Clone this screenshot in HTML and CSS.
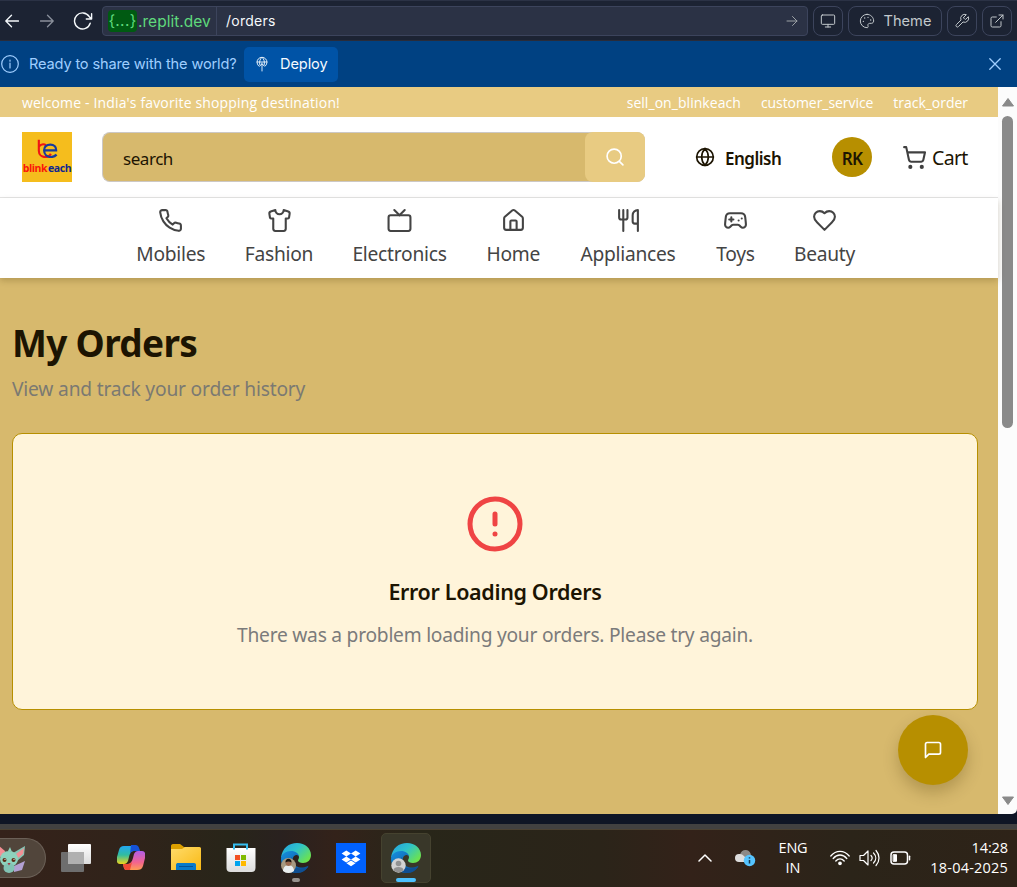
FILE: index.html
```html
<!DOCTYPE html>
<html lang="en">
<head>
<meta charset="utf-8">
<title>My Orders</title>
<link rel="stylesheet" href="styles.css">
</head>
<body>
<div class="toolbar">
  <div class="nav-buttons">
    <svg class="ico nb-back" viewBox="0 0 14 14"><path d="M13.5 7H1M6.500 1.200L.8 7l5.700 5.800"/></svg>
    <svg class="ico nb-fwd" viewBox="0 0 14 14"><path d="M.5 7H13M7.500 1.200L13.200 7l-5.700 5.800"/></svg>
    <svg class="ico nb-reload" viewBox="0 0 20 18"><path d="M17.200 11.200A8 8 0 1 1 16.200 4.500L18 6.800M18.600 1.800V7H13.300"/></svg>
  </div>
  <div class="address">
    <div class="host"><span class="braces">{...}</span><span class="domain">.replit.dev</span></div>
    <div class="path">/orders</div>
    <svg class="ico go" viewBox="0 0 12 12"><path d="M1 6h10M6.500 1.500L11 6l-4.500 4.500"/></svg>
  </div>
  <div class="tools">
    <div class="tool"><svg class="ico s16" viewBox="0 0 24 24"><rect x="2" y="3" width="20" height="14" rx="1.500"/><path d="M12 17v4M8 21h8"/></svg></div>
    <div class="tool theme"><svg class="ico s16" viewBox="0 0 24 24"><path d="M12 2a10 10 0 1 0 0 20c1.500 0 2-1 1.600-2.200-.7-2 0-4.300 2.400-4.300h2.500c2 0 3.500-1.500 3.500-3.500C22 6.500 17.500 2 12 2z"/><path d="M13.500 6.500h.1M17.500 10.500h.1M8.500 7.500h.1M6.500 12.500h.1" stroke-width="2"/></svg><span class="t-theme">Theme</span></div>
    <div class="tool"><svg class="ico s16" viewBox="0 0 24 24"><path d="M14.700 6.300a1 1 0 0 0 0 1.400l1.600 1.600a1 1 0 0 0 1.400 0l3.770-3.770a6 6 0 0 1-7.940 7.940l-6.910 6.910a2.120 2.120 0 0 1-3-3l6.910-6.910a6 6 0 0 1 7.940-7.940l-3.760 3.760z"/></svg></div>
    <div class="tool"><svg class="ico s16" viewBox="0 0 24 24"><path d="M18 13v6a2 2 0 0 1-2 2H5a2 2 0 0 1-2-2V8a2 2 0 0 1 2-2h6M15 3h6v6M10 14L21 3"/></svg></div>
  </div>
</div>
<div class="banner">
  <svg class="ico info" viewBox="0 0 20 20"><circle cx="10" cy="10" r="8.300"/><path d="M10 9v5M10 6v1.200"/></svg>
  <span class="t-ready">Ready to share with the world?</span>
  <div class="deploy"><svg class="ico dep-ico" viewBox="0 0 14 16"><path d="M4 10.300A5 5 0 1 1 10 10.300M2 6h10M7 15V7M4.800 9C4 6 5 3 7 1.300 9 3 10 6 9.200 9M5 9.800l2-2 2 2"/></svg><span class="t-deploy">Deploy</span></div>
  <svg class="ico close" viewBox="0 0 12 12"><path d="M.8.8l10.400 10.400M11.200.8L.8 11.200"/></svg>
</div>
<div class="viewport">
  <div class="page">
    <div class="promo"><span class="t-welcome">welcome - India's favorite shopping destination!</span><span class="t-sell">sell_on_blinkeach</span><span class="t-cust">customer_service</span><span class="t-track">track_order</span></div>
    <div class="header">
      <div class="logo">
        <svg class="mark" viewBox="0 0 50 26" width="50" height="26">
          <path d="M16.500 7v11.500c0 4 3 6.500 6.500 6.500 3 0 5-1.500 6-3.500M16.500 14c3-3 6-2.500 7.500-1" fill="none" stroke="#f01414" stroke-width="2.200"/>
          <path d="M22 18h12.500c.2-4-2.500-6-6-6-4 0-6.500 2.500-6.500 6 0 4.300 3 7 7 7 2.500 0 4.500-1 6-2.500" fill="none" stroke="#173a9c" stroke-width="2.300"/>
        </svg>
        <div class="wordmark"><span class="blink">blink</span><span class="each">each</span></div>
      </div>
      <div class="search"><span class="t-search">search</span><div class="search-btn"><svg class="ico s20" viewBox="0 0 24 24"><circle cx="11" cy="11" r="8.500"/><path d="M21.500 21.500l-4.300-4.300"/></svg></div></div>
      <div class="lang"><svg class="ico s20" viewBox="0 0 24 24"><circle cx="12" cy="12" r="10"/><path d="M2 12h20M12 2a14.500 14.500 0 0 0 0 20 14.500 14.500 0 0 0 0-20"/></svg><span class="t-english">English</span></div>
      <div class="avatar">RK</div>
      <div class="cart"><svg class="ico s25" viewBox="0 0 24 24"><circle cx="8" cy="21" r="1"/><circle cx="19" cy="21" r="1"/><path d="M2.050 2.050h2l2.660 12.420a2 2 0 0 0 2 1.580h9.780a2 2 0 0 0 1.950-1.570l1.650-7.430H5.120"/></svg><span class="t-cart">Cart</span></div>
    </div>
    <div class="cats">
      <div class="cat w-mob"><svg class="ico s25" viewBox="0 0 24 24"><path d="M22 16.920v3a2 2 0 0 1-2.180 2 19.790 19.790 0 0 1-8.630-3.070 19.500 19.500 0 0 1-6-6 19.790 19.790 0 0 1-3.070-8.670A2 2 0 0 1 4.110 2h3a2 2 0 0 1 2 1.720 12.840 12.840 0 0 0 .7 2.810 2 2 0 0 1-.45 2.110L8.090 9.910a16 16 0 0 0 6 6l1.270-1.270a2 2 0 0 1 2.110-.45 12.840 12.840 0 0 0 2.810.7A2 2 0 0 1 22 16.920z"/></svg><span>Mobiles</span></div>
      <div class="cat w-fas"><svg class="ico s25" viewBox="0 0 24 24"><path d="M20.380 3.460L16 2a4 4 0 0 1-8 0L3.620 3.460a2 2 0 0 0-1.340 2.230l.58 3.470a1 1 0 0 0 .99.840H6v10c0 1.100.9 2 2 2h8a2 2 0 0 0 2-2V10h2.150a1 1 0 0 0 .99-.84l.58-3.470a2 2 0 0 0-1.340-2.230z"/></svg><span>Fashion</span></div>
      <div class="cat w-ele"><svg class="ico s25" viewBox="0 0 24 24"><rect x="1.500" y="7" width="21" height="15" rx="2"/><path d="M17 2l-5 5-5-5"/></svg><span>Electronics</span></div>
      <div class="cat w-hom"><svg class="ico s25" viewBox="0 0 24 24"><path d="M15 21v-8a1 1 0 0 0-1-1h-4a1 1 0 0 0-1 1v8"/><path d="M3 10a2 2 0 0 1 .709-1.528l7-5.999a2 2 0 0 1 2.582 0l7 5.999A2 2 0 0 1 21 10v9a2 2 0 0 1-2 2H5a2 2 0 0 1-2-2z"/></svg><span>Home</span></div>
      <div class="cat w-app"><svg class="ico s25" viewBox="0 0 24 24"><path d="M3 2v7c0 1.100.9 2 2 2h4a2 2 0 0 0 2-2V2M7 2v20M21 15V2a5 5 0 0 0-5 5v6c0 1.100.9 2 2 2h3zm0 0v7"/></svg><span>Appliances</span></div>
      <div class="cat w-toy"><svg class="ico s25" viewBox="0 0 24 24"><path d="M6 11h4M8 9v4M15 12h.01M18 10h.01M17.320 5H6.680a4 4 0 0 0-3.978 3.590C2.604 9.416 2 14.456 2 16a3 3 0 0 0 3 3c1 0 1.500-.5 2-1l1.414-1.414A2 2 0 0 1 9.828 16h4.344a2 2 0 0 1 1.414.586L17 18c.5.5 1 1 2 1a3 3 0 0 0 3-3c0-1.545-.604-6.584-.685-7.258A4 4 0 0 0 17.320 5z"/></svg><span>Toys</span></div>
      <div class="cat w-bea"><svg class="ico s25" viewBox="0 0 24 24"><path d="M19 14c1.490-1.460 3-3.210 3-5.500A5.500 5.500 0 0 0 16.500 3c-1.760 0-3 .5-4.500 2-1.500-1.500-2.740-2-4.500-2A5.500 5.500 0 0 0 2 8.500c0 2.300 1.500 4.050 3 5.500l7 7Z"/></svg><span>Beauty</span></div>
    </div>
    <div class="content">
      <h1><span class="t-h1">My Orders</span></h1>
      <p class="sub"><span class="t-sub">View and track your order history</span></p>
      <div class="card">
        <svg class="ico alert" viewBox="0 0 24 24"><circle cx="12" cy="12" r="10"/><path d="M12 8v4M12 16h.01"/></svg>
        <h2><span class="t-h2">Error Loading Orders</span></h2>
        <p class="msg"><span class="t-msg">There was a problem loading your orders. Please try again.</span></p>
      </div>
      <div class="chat"><svg class="ico s20" viewBox="0 0 24 24"><path d="M21 15a2 2 0 0 1-2 2H7l-4 4V5a2 2 0 0 1 2-2h14a2 2 0 0 1 2 2z"/></svg></div>
    </div>
  </div>
  <div class="scrollbar">
    <svg width="14" height="10" viewBox="0 0 14 10"><path d="M7 1.500L12.500 9h-11z" fill="#8a8a8a" stroke="#8a8a8a" stroke-linejoin="round"/></svg>
    <div class="thumb"></div>
    <svg class="down" width="14" height="10" viewBox="0 0 14 10"><path d="M7 8.500L1.500 1h11z" fill="#8a8a8a" stroke="#8a8a8a" stroke-linejoin="round"/></svg>
  </div>
</div>
<div class="edge"></div>
<div class="taskbar">
  <svg width="0" height="0" class="defs">
    <defs>
      <linearGradient id="eg" x1="0" y1="0" x2="1" y2=".7"><stop offset="0" stop-color="#239fe5"/><stop offset=".5" stop-color="#2fc3c9"/><stop offset="1" stop-color="#6de34c"/></linearGradient>
      <linearGradient id="eb" x1="0" y1="0" x2="1" y2="1"><stop offset="0" stop-color="#1690e0"/><stop offset="1" stop-color="#0b4b91"/></linearGradient>
      <linearGradient id="c1" x1="0" y1="0" x2="0" y2="1"><stop offset="0" stop-color="#22a7f2"/><stop offset=".5" stop-color="#31bda0"/><stop offset="1" stop-color="#efd51b"/></linearGradient>
      <linearGradient id="c2" x1="0" y1="0" x2="0" y2="1"><stop offset="0" stop-color="#b05de8"/><stop offset=".6" stop-color="#f2648f"/><stop offset="1" stop-color="#ff9c52"/></linearGradient>
      <linearGradient id="fo" x1="0" y1="0" x2="1" y2="1"><stop offset="0" stop-color="#ffdc6b"/><stop offset="1" stop-color="#f9b914"/></linearGradient>
      <linearGradient id="wh" x1="0" y1="0" x2="0" y2="1"><stop offset="0" stop-color="#fff"/><stop offset="1" stop-color="#dcdcdc"/></linearGradient>
      <g id="edge-logo">
        <path d="M0 15C1 5 8 0 16 0c8 0 14 5.500 14 12 0 5-3.500 8-8 8-3 0-5-1-5-2.500 0-1 1-1.700 1-3.500 0-2-2-3.500-6-3.500C7 10.500 2 12 0 15z" fill="url(#eg)"/>
        <path d="M0 16c0-5 5-8 10-8 4.500 0 8 2.500 8 5.500-1-1.500-2-1.500-3-1.500-3 1-4 4-3 7 1.200 4.500 6 6 10 5.500 2-.3 4-.9 5.500-1.700C25 27.500 21 30 15.500 30 7 30 0 24 0 16z" fill="url(#eb)"/>
        <path d="M11 14c-2 5 0 11 8 11.500 3 .2 6-.7 8.500-2.200C25 27.500 21 30 16 30c-9-1-11-10-5-16z" fill="#0f4f93"/>
      </g>
    </defs>
  </svg>
  <div class="pet"><svg width="46" height="40" viewBox="0 0 46 40">
    <path d="M14 27l11-5-3 9-8 2z" fill="#b2a0d3"/><path d="M13 14l12-7-1 9-7 6z" fill="#87c5b5"/><path d="M16 15l8-6-1 6-5 4z" fill="#f28f94"/><path d="M-1 7l6 5-1 8-5-3z" fill="#f28f94"/>
    <ellipse cx="9" cy="20" rx="9" ry="8" fill="#8ed2bd"/><ellipse cx="9" cy="29" rx="5.500" ry="5" fill="#82c3b4"/><path d="M8 12l2-4 2 5z" fill="#8ed2bd"/>
    <circle cx="4.500" cy="21" r="2" fill="#5c2a14"/><circle cx="13.500" cy="21" r="2" fill="#5c2a14"/><circle cx="5" cy="20.300" r=".6" fill="#fff"/><circle cx="14" cy="20.300" r=".6" fill="#fff"/><path d="M7.500 24h3l-1.500 2.500z" fill="#a53740"/>
  </svg></div>
  <svg class="app a-task" width="30" height="28" viewBox="0 0 30 28"><rect x="7" width="23" height="20" rx="1" fill="url(#wh)"/><rect y="8" width="23" height="20" rx="1" fill="#6e6e6e"/><path d="M7 8h16v12H7z" fill="#b0b0b0"/></svg>
  <svg class="app a-copilot" width="28" height="26" viewBox="0 0 28 26"><path d="M7 1h11c3 0 4 2 4.500 5H17c-3 0-4 2-5 6l-1 4c-1 2-2 3-4 3H3c-3 0-4-3-3-7l2-7C3 2 4 1 7 1z" fill="url(#c1)"/><path d="M14 0h5c2 0 3 2 4 6h-6c-2 0-3 1-4 3z" fill="#1552d8"/><path d="M21 6h4c3 0 4 3 3 7l-2 8c-1 3-3 4-6 4H10c-3 0-3-2-4-6h4c3 0 5-2 6-6l1-4c1-2 2-3 4-3z" fill="url(#c2)"/><path d="M6 19h5c2 0 3-1 4-2l-2 8h-3c-3 0-3-2-4-6z" fill="#f04b35"/></svg>
  <svg class="app a-folder" width="30" height="27" viewBox="0 0 30 27"><path d="M0 2c0-1 .6-2 2-2h7l4 3h15c1.300 0 2 1 2 2v8H0z" fill="#dda000"/><path d="M0 5h11l3-2h14c1.300 0 2 .8 2 2v21H0z" fill="url(#fo)"/><path d="M5 26v-5c0-1.500 1-2 2-2h16c1.300 0 2 .8 2 2v5z" fill="#087acb"/><path d="M8 22.500h14" stroke="#035399"/></svg>
  <svg class="app a-store" width="30" height="30" viewBox="0 0 30 30"><path d="M.5 5h29v20a4 4 0 0 1-4 4h-21a4 4 0 0 1-4-4z" fill="url(#wh)"/><path d="M8 6.500V1.500h13v5" fill="none" stroke="#35bdf0" stroke-width="2"/><path d="M9 12h5v5H9z" fill="#f25022"/><path d="M15 12h5v5h-5z" fill="#7fba00"/><path d="M9 18h5v5H9z" fill="#00a4ef"/><path d="M15 18h5v5h-5z" fill="#ffb900"/></svg>
  <div class="app-slot slot-one"><svg width="30" height="30" viewBox="0 0 30 30"><use href="#edge-logo"/><circle cx="7.500" cy="22.500" r="7.500" fill="#a79a82"/><path d="M2 28c0-4 3-6 5.500-6s5.500 2 5.500 6c-3 2.500-8 2.500-11 0z" fill="#e9eef0"/><circle cx="7.500" cy="20" r="3" fill="#9b6b50"/><path d="M4.500 19.500c-.5-5 6.500-5 6 0-2-1.500-4-1.500-6 0z" fill="#17130f"/></svg><span class="dot"></span></div>
  <svg class="app a-dropbox" width="30" height="30" viewBox="0 0 30 30"><path d="M0 0h30v30H0z" fill="#0061fe"/><path d="M10.300 7.500l4.700 3-4.700 3-4.700-3zM19.700 7.500l4.700 3-4.700 3-4.700-3zM10.300 13.500l4.700 3-4.700 3-4.700-3zM19.700 13.500l4.700 3-4.700 3-4.700-3zM15 17.500l4.500 2.800L15 23.200l-4.500-2.900z" fill="#fff"/></svg>
  <div class="app-slot slot-two"><svg width="30" height="30" viewBox="0 0 30 30"><use href="#edge-logo"/><circle cx="7.500" cy="22.500" r="7.200" fill="#d2d2d2"/><circle cx="7.500" cy="20.500" r="2.800" fill="#929292"/><path d="M2.500 27c0-4 10-4 10 0-2 3-8 3-10 0z" fill="#929292"/></svg><span class="dot active"></span></div>
  <div class="tray">
    <svg class="ico chev" width="14" height="10" viewBox="0 0 14 10"><path d="M1 8l6-6 6 6"/></svg>
    <svg class="cloud" width="22" height="18" viewBox="0 0 22 18"><path d="M5 6a5.500 5.500 0 0 1 11 1c3 0 4 6 1 6H5z" fill="#8d8986"/><path d="M4 13a4 4 0 0 1 0-8c3 0 5 1 8 6v2z" fill="#ddd"/><circle cx="14.500" cy="11.500" r="5.700" fill="#55c4ff"/><path d="M14.500 11v3.500M14.500 8.200v1.300" stroke="#17384d" stroke-width="1.500"/></svg>
    <div class="ime"><span class="t-eng">ENG</span><span class="t-in">IN</span></div>
    <svg class="ico wifi" width="20" height="16" viewBox="0 0 20 16"><path d="M.8 6C6-.3 14-.3 19.200 6M3.200 8.500c4-4.700 9.600-4.700 13.600 0M5.800 11c2.500-2.900 5.900-2.900 8.400 0"/><circle cx="10" cy="13.300" r="1.200" fill="#fff"/></svg>
    <svg class="ico vol" width="21" height="18" viewBox="0 0 21 18"><path d="M1 6.500h3.500L9 2v14l-4.500-4.500H1zM12 6.500c1.400 1.500 1.400 3.500 0 5M14.500 4c3 3 3 7 0 10M17 1.500c4 4.500 4 10.500 0 15"/></svg>
    <svg class="ico bat" width="21" height="14" viewBox="0 0 21 14"><rect x="1" y="1" width="16.500" height="12" rx="3"/><rect x="3.500" y="3.700" width="3" height="6.600" fill="#fff" stroke-width="1"/><path d="M19.500 5.200v3.600"/></svg>
    <div class="clock"><span class="t-time">14:28</span><span class="t-date">18-04-2025</span></div>
  </div>
</div>
</body>
</html>
```

FILE: styles.css
```css
* { box-sizing: border-box; }
body { margin: 0; width: 1017px; height: 887px; overflow: hidden; display: flex; flex-direction: column; font-family: "Noto Sans", "Open Sans", sans-serif; color: #1c1402; background: #0e1525; }
span { white-space: nowrap; display: block; flex: none; }
h1, h2, p { margin: 0; }
svg { display: block; flex: none; }
.ico { fill: none; stroke: currentColor; stroke-width: 1.500; stroke-linecap: round; stroke-linejoin: round; }
.s16 { width: 16px; height: 16px; }
.s20 { width: 20px; height: 20px; }
.s25 { width: 25px; height: 25px; stroke-width: 2; }

.toolbar { height: 41px; flex: none; display: flex; align-items: center; background: #1c2333; border-top: 1px solid #2b3245; border-bottom: 1px solid #292c3a; font-family: Inter, Roboto, sans-serif; color: #f5f9fc; }
.nav-buttons { width: 102px; display: flex; align-items: center; padding-left: 5px; }
.nb-back, .nb-fwd { width: 14px; height: 14px; stroke-width: 1.300; }
.nb-fwd { color: #8a909c; margin-left: 21px; }
.nb-reload { width: 20px; height: 18px; margin-left: 19px; stroke-width: 1.400; }
.address { width: 706px; height: 30px; display: flex; align-items: center; border: 1px solid #3c445c; border-radius: 4px; background: #2b3245; }
.host { width: 114px; height: 28px; display: flex; align-items: center; padding-left: 5px; border-right: 1px solid #3c445c; color: #5fd97c; font-size: 15.500px; }
.braces { width: 29px; height: 22px; line-height: 21px; border-radius: 4px; background: #005a12; text-align: center; letter-spacing: .3px; }
.domain { margin-left: 1px; letter-spacing: .02px; line-height: 22px; padding-top: 2px; }
.path { margin-left: 9px; font-size: 14px; letter-spacing: .25px; flex: 1; }
.go { width: 12px; height: 12px; margin-right: 9px; stroke-width: 1; color: #9da2a6; }
.tools { display: flex; gap: 5px; margin-left: 5px; color: #c2c8cc; }
.tool { width: 30px; height: 30px; border: 1px solid #3c445c; border-radius: 8px; display: flex; align-items: center; justify-content: center; }
.theme { width: 94px; gap: 9px; font-size: 14.600px; }

.banner { height: 46px; flex: none; display: flex; align-items: center; background: #004182; color: #9fceff; font-family: Inter, Roboto, sans-serif; font-size: 14.600px; }
.info { width: 20px; height: 20px; stroke-width: 1.200; }
.t-ready { margin-left: 9px; width: 207px; margin-right: 8px; letter-spacing: -.16px; }
.deploy { width: 94px; height: 35px; display: flex; align-items: center; border-radius: 5px; background: #0053a6; color: #f5faff; padding-left: 11px; }
.t-deploy { letter-spacing: -.1px; }
.dep-ico { width: 14px; height: 16px; margin-right: 11px; stroke-width: .9; }
.close { width: 12px; height: 12px; margin-left: auto; margin-right: 16px; stroke-width: 1.300; }

.viewport { height: 727px; flex: none; display: flex; }
.page { width: 998px; display: flex; flex-direction: column; background: #d7b96d; }
.promo { height: 30px; flex: none; display: flex; align-items: center; padding: 0 30px 0 22px; gap: 20px; background: #e8cb82; color: #fff; font-family: "Open Sans", sans-serif; font-size: 14px; font-weight: 500; }
.t-welcome { margin-right: auto; letter-spacing: .15px; }
.t-sell { letter-spacing: .05px; }
.t-cust { letter-spacing: -.06px; }
.t-track { letter-spacing: -.03px; }
.header { height: 81px; flex: none; display: flex; align-items: center; background: #fff; border-bottom: 1px solid #e5e5e5; padding-left: 22px; }
.logo { width: 50px; height: 50px; background: #f5bd1d; }
.mark { padding-top: 1px; }
.wordmark { display: flex; justify-content: center; gap: 1px; height: 22px; line-height: 21px; font-family: "Open Sans", sans-serif; font-size: 10.500px; font-weight: 700; letter-spacing: -.45px; }
.blink { color: #fb1509; }
.each { color: #10278f; }
.search { width: 543px; height: 50px; margin-left: 30px; display: flex; align-items: center; justify-content: space-between; border: 1px solid #ccc8c5; border-right: 0; border-radius: 8px; background: #d7b96d; padding-left: 20px; font-size: 17px; }
.t-search { letter-spacing: -.45px; padding-top: 2px; }
.search-btn { width: 60px; height: 50px; flex: none; display: flex; align-items: center; justify-content: center; border-radius: 8px; background: #e8cb82; color: #fff; }
.search-btn .ico { stroke-width: 2; }
.lang { width: 87px; display: flex; align-items: center; gap: 10px; margin-left: 50px; font-size: 17px; font-weight: 600; }
.lang .ico { stroke-width: 2; }
.t-english { letter-spacing: -.5px; padding-top: 2px; }
.avatar { width: 40px; height: 40px; flex: none; margin-left: 50px; padding-top: 2px; display: flex; align-items: center; justify-content: center; border-radius: 50%; background: #b78f00; font-size: 17px; font-weight: 600; letter-spacing: -.8px; }
.cart { display: flex; align-items: center; gap: 5px; margin-left: 30px; font-size: 19.500px; }
.t-cart { letter-spacing: -.65px; padding-top: 1px; }
.cart .ico { color: #404040; }
.cats { height: 80px; flex: none; display: flex; gap: 40px; padding: 10px 0 0 136px; background: #fff; color: #444; font-size: 19.200px; letter-spacing: -.25px; box-shadow: 0 3px 6px rgba(70, 50, 0, .22); position: relative; }
.cat { display: flex; flex-direction: column; align-items: center; gap: 6px; line-height: 30px; }
.w-mob { width: 69.500px; } .w-fas { width: 67px; } .w-ele { width: 94px; } .w-hom { width: 53.500px; } .w-app { width: 96px; } .w-toy { width: 39px; } .w-bea { width: 59px; }

.content { flex: 1; position: relative; padding: 40px 20px 0 12px; }
h1 { font-size: 37px; line-height: 50px; font-weight: 700; letter-spacing: -.68px; }
.sub { margin-top: 6px; font-size: 19.200px; line-height: 30px; letter-spacing: -.18px; color: #7b7972; }
.card { margin-top: 29px; height: 277px; border: 1px solid #b78f00; border-radius: 10px; background: #fff4da; display: flex; flex-direction: column; align-items: center; padding-top: 60px; }
.alert { width: 60px; height: 60px; stroke-width: 2; color: #ef4444; }
h2 { margin-top: 20px; font-size: 21.500px; line-height: 35px; font-weight: 600; letter-spacing: -.35px; }
.msg { margin-top: 11px; font-size: 19.200px; line-height: 30px; letter-spacing: -.24px; color: #7b7b7b; }
.chat { position: absolute; left: 898px; top: 437px; width: 70px; height: 70px; border-radius: 50%; background: #b78f00; color: #fff; display: flex; align-items: center; justify-content: center; box-shadow: 0 8px 15px rgba(70, 50, 0, .25); }
.chat .ico { stroke-width: 2; }
.scrollbar { width: 19px; background: #fcfcfc; display: flex; flex-direction: column; align-items: center; padding: 10px 0 8px; border-bottom-right-radius: 5px; }
.thumb { width: 11px; height: 312px; margin-top: 9px; border-radius: 6px; background: #8a8a8a; }
.down { margin-top: auto; }

.edge { height: 15px; flex: none; border-bottom: 5px solid #414141; background: #0e1525; }
.taskbar { height: 58px; flex: none; display: flex; align-items: center; border-top: 1px solid #4b4234; background: linear-gradient(90deg, #35221a 0, #30231a 130px, #282519 230px, #29211f 280px, #33221a 335px, #282619 420px, #2b2419 600px, #332219 690px, #2b2419 850px, #2e2318 1017px); padding-bottom: 2px; color: #fff; }
.defs { position: absolute; }
.pet { width: 46px; height: 40px; border: 1px solid #6b6057; border-left: 0; border-radius: 0 20px 20px 0; background: #51453b; overflow: hidden; }
.a-task { margin-left: 15px; }
.a-copilot { margin-left: 26px; }
.a-folder { margin-left: 26px; }
.a-store { margin-left: 25px; }
.app-slot { width: 50px; height: 50px; border-radius: 5px; display: flex; flex-direction: column; align-items: center; padding-top: 10px; }
.slot-one { margin-left: 15px; }
.a-dropbox { margin-left: 15px; }
.slot-two { margin-left: 15px; background: #393729; border: 1px solid #45422f; padding-top: 9px; }
.dot { width: 8px; height: 4px; margin-top: 5px; border-radius: 2px; background: #96918d; }
.active { width: 20px; background: #4cc2ff; }
.tray { margin-left: 267px; display: flex; align-items: center; font-family: "Open Sans", sans-serif; font-size: 14.500px; line-height: 20px; }
.cloud { margin-left: 23px; }
.ime { width: 30px; margin-left: 21px; display: flex; flex-direction: column; align-items: center; }
.t-eng { letter-spacing: -.2px; }
.wifi { margin-left: 22px; stroke-width: 1.300; }
.vol { margin-left: 9px; stroke-width: 1.200; }
.bat { margin-left: 10px; }
.clock { width: 79px; margin-left: 18px; display: flex; flex-direction: column; align-items: flex-end; }
.t-time { letter-spacing: -.1px; }
.t-date { letter-spacing: .2px; }
```
